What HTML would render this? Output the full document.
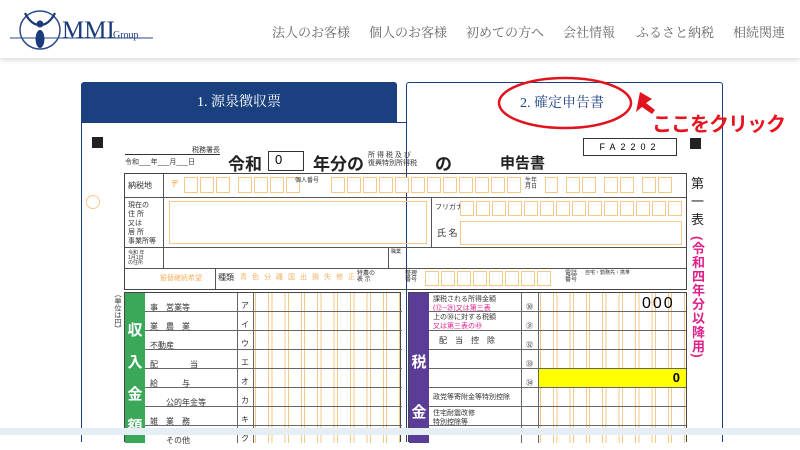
<!DOCTYPE html>
<html><head><meta charset="utf-8"><style>
*{margin:0;padding:0;box-sizing:border-box}
body{width:800px;height:435px;overflow:hidden;background:#fff;font-family:"Liberation Sans","Noto Sans CJK JP",sans-serif;position:relative}
.a{position:absolute}
.hdr{left:0;top:0;width:800px;height:58px;background:#fff;box-shadow:0 2px 5px rgba(0,0,0,.15)}
.nav{top:22px;font-family:"Liberation Serif","Noto Serif CJK SC",serif;font-size:13px;color:#666}
.cells{display:flex;gap:2px}
.cells i{display:block;border:1px solid #f5c98a;background:#fff}
.t{font-size:8px;color:#333;line-height:1}
.row{border-bottom:1px solid #555}
</style></head><body>
<div class="a hdr"></div>
<svg class="a" style="left:8px;top:8px" width="155" height="45">
<line x1="2" y1="30" x2="145" y2="30" stroke="#2a4a8a" stroke-width="1"/>
<ellipse cx="32" cy="22" rx="20" ry="19" fill="none" stroke="#2a4a8a" stroke-width="1.5"/>
<ellipse cx="32" cy="31" rx="4.5" ry="9" fill="#1a3a7a"/>
<circle cx="32" cy="16" r="3.5" fill="#1a3a7a"/>
<path d="M17 5 Q23 17 32 17 Q41 17 47 5" fill="none" stroke="#1a3a7a" stroke-width="2.2"/>
<text x="54" y="30" font-family="Liberation Serif,serif" font-size="25" fill="#1a3a7a">MMI</text>
<text x="105" y="30" font-family="Liberation Serif,serif" font-size="10" fill="#1a3a7a">Group</text>
</svg>
<div class="a nav" style="left:272px">法人のお客様</div>
<div class="a nav" style="left:369px">個人のお客様</div>
<div class="a nav" style="left:466px">初めての方へ</div>
<div class="a nav" style="left:563px">会社情報</div>
<div class="a nav" style="left:636px">ふるさと納税</div>
<div class="a nav" style="left:733px">相続関連</div>

<div class="a" style="left:81px;top:82px;width:316px;height:41px;background:#1a4080;border-radius:3px 3px 0 0;color:#fff;font-family:'Liberation Serif','Noto Serif CJK SC',serif;font-size:14px;text-align:center;line-height:41px">1. 源泉徴収票</div>
<div class="a" style="left:406px;top:82px;width:317px;height:360px;border:1px solid #1a4080;border-bottom:none;border-radius:3px 3px 0 0"></div>
<div class="a" style="left:81px;top:122px;width:326px;height:320px;border-left:1px solid #1a4080;border-top:1px solid #1a4080"></div>
<div class="a" style="left:520px;top:92px;font-family:'Liberation Serif','Noto Serif CJK SC',serif;font-size:14px;color:#1a4080">2. 確定申告書</div>
<svg class="a" style="left:490px;top:72px" width="310" height="70">
<ellipse cx="75" cy="31" rx="66" ry="25" fill="none" stroke="#e0141e" stroke-width="2.5"/>
<path d="M150 20 L146 40 L152 35 L162 42 L165 38 L156 31 L162 27 Z" fill="#e0141e"/>
</svg>
<div class="a" style="left:652px;top:108px;font-size:20px;font-weight:bold;color:#e8141e;letter-spacing:-1px">ここをクリック</div>

<div class="a" style="left:92px;top:137px;width:11px;height:11px;background:#222"></div>
<div class="a" style="left:690px;top:138px;width:11px;height:11px;background:#222"></div>
<div class="a t" style="left:125px;top:147px;width:95px;border-bottom:1px solid #333;text-align:right;font-size:7px">税務署長</div>
<div class="a t" style="left:125px;top:159px;font-size:7px">令和___年___月___日</div>
<div class="a" style="left:228px;top:150px;font-size:17px;font-weight:bold;color:#222">令和</div>
<div class="a" style="left:268px;top:151px;width:36px;height:20px;border:1px solid #333;font-size:13px;padding-left:6px">0</div>
<div class="a" style="left:313px;top:150px;font-size:17px;font-weight:bold;color:#222">年分の</div>
<div class="a t" style="left:368px;top:152px;font-size:7px;line-height:8px">所 得 税 及 び<br>復興特別所得税</div>
<div class="a" style="left:435px;top:150px;font-size:17px;font-weight:bold;color:#222">の</div>
<div class="a" style="left:500px;top:152px;font-size:15px;font-weight:bold;color:#222">申告書</div>
<div class="a" style="left:583px;top:138px;width:94px;height:18px;border:1px solid #333;font-size:9px;letter-spacing:5px;text-align:center;line-height:16px">FA2202</div>
<div class="a" style="left:86px;top:195px;width:14px;height:14px;border:1px solid #f5c98a;border-radius:50%"></div>

<div class="a" style="left:124px;top:173px;width:563px;height:117px;border:1.5px solid #444">
 <div class="row" style="height:24px;position:relative">
  <div class="a t" style="left:3px;top:8px">納税地</div>
  <div class="a" style="left:38px;top:0;height:23px;border-left:1px solid #555"></div>
  <div class="a cells" style="left:44px;top:3px"><i style="width:13px;height:16px;border:none;color:#f5a030;font-size:9px">〒</i><i style="width:14px;height:16px"></i><i style="width:14px;height:16px"></i><i style="width:14px;height:16px"></i><i style="width:14px;height:16px;margin-left:6px"></i><i style="width:14px;height:16px"></i><i style="width:14px;height:16px"></i><i style="width:14px;height:16px"></i></div>
  <div class="a t" style="left:170px;top:4px;font-size:6px">個人番号</div>
  <div class="a cells" style="left:206px;top:3px"><i style="width:14px;height:16px"></i><i style="width:14px;height:16px"></i><i style="width:14px;height:16px"></i><i style="width:14px;height:16px"></i><i style="width:14px;height:16px"></i><i style="width:14px;height:16px"></i><i style="width:14px;height:16px"></i><i style="width:14px;height:16px"></i><i style="width:14px;height:16px"></i><i style="width:14px;height:16px"></i><i style="width:14px;height:16px"></i><i style="width:14px;height:16px"></i></div>
  <div class="a t" style="left:400px;top:4px;font-size:6px">生年<br>月日</div>
  <div class="a cells" style="left:420px;top:3px"><i style="width:13px;height:16px"></i><i style="width:14px;height:16px;margin-left:6px"></i><i style="width:14px;height:16px"></i><i style="width:14px;height:16px;margin-left:6px"></i><i style="width:14px;height:16px"></i><i style="width:14px;height:16px;margin-left:6px"></i><i style="width:14px;height:16px"></i></div>
 </div>
 <div class="row" style="height:50px;position:relative">
  <div class="a t" style="left:3px;top:3px;font-size:7px;line-height:9px">現在の<br>住 所<br>又は<br>居 所<br>事業所等</div>
  <div class="a" style="left:38px;top:0;height:49px;border-left:1px solid #555"></div>
  <div class="a" style="left:44px;top:3px;width:258px;height:43px;border:1px solid #f5c98a"></div>
  <div class="a" style="left:306px;top:0;height:49px;border-left:1px solid #555"></div>
  <div class="a t" style="left:310px;top:6px;font-size:7px">フリガナ</div>
  <div class="a t" style="left:312px;top:31px;font-size:9px">氏 名</div>
  <div class="a cells" style="left:335px;top:3px"><i style="width:14px;height:15px"></i><i style="width:14px;height:15px"></i><i style="width:14px;height:15px"></i><i style="width:14px;height:15px"></i><i style="width:14px;height:15px"></i><i style="width:14px;height:15px"></i><i style="width:14px;height:15px"></i><i style="width:14px;height:15px"></i><i style="width:14px;height:15px"></i><i style="width:14px;height:15px"></i><i style="width:14px;height:15px"></i><i style="width:14px;height:15px"></i><i style="width:14px;height:15px"></i><i style="width:14px;height:15px"></i></div>
  <div class="a" style="left:335px;top:23px;width:222px;height:24px;border:1px solid #f5c98a"></div>
 </div>
 <div class="row" style="height:21px;position:relative">
  <div class="a t" style="left:3px;top:3px;font-size:5px">令和 年<br>1月1日<br>の住所</div>
  <div class="a" style="left:38px;top:0;height:20px;border-left:1px solid #555"></div>
  <div class="a" style="left:263px;top:0;height:20px;border-left:1px solid #555"></div>
  <div class="a t" style="left:266px;top:2px;font-size:5px">職業</div>
 </div>
 <div style="height:20px;position:relative">
  <div class="a t" style="left:35px;top:6px;font-size:7px;color:#f5b060">振替継続希望</div>
  <div class="a" style="left:90px;top:0;height:20px;border-left:1px solid #555"></div>
  <div class="a t" style="left:93px;top:5px;font-size:8px">種類</div>
  <div class="a t" style="left:115px;top:5px;font-size:7px;color:#f5b060;letter-spacing:5px">青色分離国出損失修正</div>
  <div class="a t" style="left:232px;top:2px;font-size:6px">特農の<br>表 示</div>
  <div class="a t" style="left:280px;top:2px;font-size:6px">整理<br>番号</div>
  <div class="a cells" style="left:300px;top:2px"><i style="width:14px;height:15px"></i><i style="width:14px;height:15px"></i><i style="width:14px;height:15px"></i><i style="width:14px;height:15px"></i><i style="width:14px;height:15px"></i><i style="width:14px;height:15px"></i><i style="width:14px;height:15px"></i><i style="width:14px;height:15px"></i></div>
  <div class="a t" style="left:440px;top:2px;font-size:6px">電話<br>番号</div>
  <div class="a t" style="left:460px;top:2px;font-size:5px">自宅・勤務先・携帯</div>
 </div>
</div>

<div class="a" style="left:691px;top:175px;width:14px;font-size:13px;line-height:18px;color:#222">第一表</div>
<div class="a" style="left:689px;top:236px;writing-mode:vertical-rl;font-size:13px;font-weight:bold;line-height:16px;color:#e0208a;letter-spacing:1px">(令和四年分以降用)</div>
<div class="a" style="left:112px;top:295px;writing-mode:vertical-rl;font-size:7px;color:#333">(単位は円)</div>

<div class="a" style="left:124px;top:292px;width:277px;height:150px;border:1.5px solid #444;border-bottom:none">
 <div class="a" style="left:0;top:0;width:20px;height:150px;background:#3aa858;color:#fff;font-size:15px;font-weight:bold;text-align:center;line-height:32px;padding-top:22px">収<br>入<br>金<br>額</div>
 <div class="a" style="left:128px;top:0;width:148px;height:150px;background:repeating-linear-gradient(90deg,transparent 0 2px,#f5c98a 2px 3px,transparent 3px 15px,#f5c98a 15px 16px,transparent 16px 16.4px)"></div>
 <div class="a" style="left:20px;top:0;width:257px;height:150px;background:repeating-linear-gradient(180deg,transparent 0 18px,#666 18px 19px)"></div>
 <div class="a t" style="left:25px;top:5px;line-height:19px;font-size:8px">事　営業等<br>業　農　業<br>不動産<br>配　　　　当<br>給　　　与<br>　　公的年金等<br>雑　業　務<br>　　その他</div>
 <div class="a" style="left:112px;top:0;height:150px;border-left:1px solid #666"></div>
 <div class="a t" style="left:112px;top:3px;font-size:8px;line-height:19px;text-align:center;width:16px">ア<br>イ<br>ウ<br>エ<br>オ<br>カ<br>キ<br>ク</div>
 <div class="a" style="left:128px;top:0;height:150px;border-left:1px solid #666"></div>
</div>

<div class="a" style="left:408px;top:292px;width:279px;height:150px;border:1.5px solid #444;border-bottom:none">
 <div class="a" style="left:0;top:0;width:20px;height:150px;background:#5b3c96;color:#fff;font-size:15px;font-weight:bold;text-align:center;line-height:50px;padding-top:45px">税<br>金</div>
 <div class="a" style="left:129px;top:0;width:148px;height:150px;background:repeating-linear-gradient(90deg,transparent 0 2px,#f5c98a 2px 3px,transparent 3px 15px,#f5c98a 15px 16px,transparent 16px 16.4px)"></div>
 <div class="a" style="left:129px;top:76px;width:148px;height:18px;background:#ffff00;text-align:right;font-weight:bold;font-size:13px;padding-right:6px;line-height:18px">0</div>
 <div class="a" style="left:20px;top:0;width:257px;height:150px;background:repeating-linear-gradient(180deg,transparent 0 18px,#666 18px 19px)"></div>
 <div class="a t" style="left:24px;top:2px;font-size:7px;line-height:9px">課税される所得金額<br><span style="color:#e0208a">(⑫−㉙)又は第三表</span><br>上の㉚に対する税額<br><span style="color:#e0208a">又は第三表の㊾</span></div>
 <div class="a t" style="left:30px;top:44px;font-size:8px;letter-spacing:8px">配当控除</div>
 <div class="a t" style="left:24px;top:101px;font-size:7px">政党等寄附金等特別控除</div>
 <div class="a t" style="left:24px;top:116px;font-size:7px;line-height:9px">住宅耐震改修<br>特別控除等</div>
 <div class="a" style="left:112px;top:0;height:150px;border-left:1px solid #666"></div>
 <div class="a t" style="left:112px;top:5px;font-size:7px;line-height:19px;text-align:center;width:17px">㉚<br>㉛<br>㉜<br>㉝<br>㉞</div>
 <div class="a" style="left:129px;top:0;height:150px;border-left:1px solid #666"></div>
 <div class="a" style="left:233px;top:2px;font-size:16px;letter-spacing:2px">000</div>
</div>

<div class="a" style="left:0;top:428px;width:800px;height:7px;background:#e4eef4"></div>
</body></html>
